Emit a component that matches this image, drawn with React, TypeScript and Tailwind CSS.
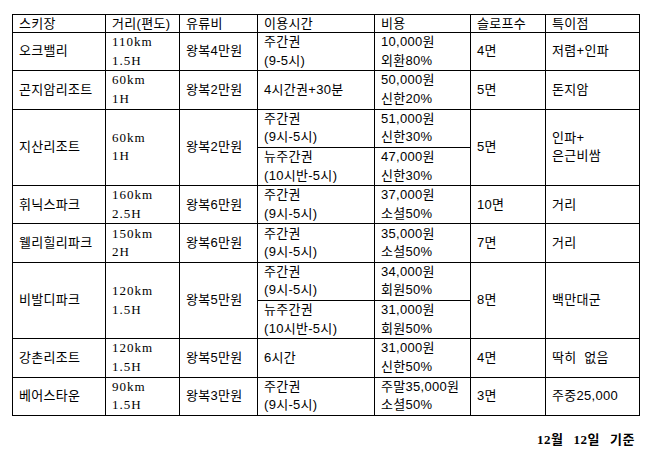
import React from "react";

type Sub = { time: string[]; cost: string[] };
type Row = {
  name: string;
  dist: string[];
  fee: string;
  subs: Sub[];
  slopes: string;
  note: string[];
};

const rows: Row[] = [
  { name: "오크밸리", dist: ["110km", "1.5H"], fee: "왕복4만원", subs: [{ time: ["주간권", "(9-5시)"], cost: ["10,000원", "외환80%"] }], slopes: "4면", note: ["저렴+인파"] },
  { name: "곤지암리조트", dist: ["60km", "1H"], fee: "왕복2만원", subs: [{ time: ["4시간권+30분"], cost: ["50,000원", "신한20%"] }], slopes: "5면", note: ["돈지암"] },
  { name: "지산리조트", dist: ["60km", "1H"], fee: "왕복2만원", subs: [{ time: ["주간권", "(9시-5시)"], cost: ["51,000원", "신한30%"] }, { time: ["뉴주간권", "(10시반-5시)"], cost: ["47,000원", "신한30%"] }], slopes: "5면", note: ["인파+", "은근비쌈"] },
  { name: "휘닉스파크", dist: ["160km", "2.5H"], fee: "왕복6만원", subs: [{ time: ["주간권", "(9시-5시)"], cost: ["37,000원", "소셜50%"] }], slopes: "10면", note: ["거리"] },
  { name: "웰리힐리파크", dist: ["150km", "2H"], fee: "왕복6만원", subs: [{ time: ["주간권", "(9시-5시)"], cost: ["35,000원", "소셜50%"] }], slopes: "7면", note: ["거리"] },
  { name: "비발디파크", dist: ["120km", "1.5H"], fee: "왕복5만원", subs: [{ time: ["주간권", "(9시-5시)"], cost: ["34,000원", "회원50%"] }, { time: ["뉴주간권", "(10시반-5시)"], cost: ["31,000원", "회원50%"] }], slopes: "8면", note: ["백만대군"] },
  { name: "강촌리조트", dist: ["120km", "1.5H"], fee: "왕복5만원", subs: [{ time: ["6시간"], cost: ["31,000원", "신한50%"] }], slopes: "4면", note: ["딱히\u00a0\u00a0없음"] },
  { name: "베어스타운", dist: ["90km", "1.5H"], fee: "왕복3만원", subs: [{ time: ["주간권", "(9시-5시)"], cost: ["주말35,000원", "소셜50%"] }], slopes: "3면", note: ["주중25,000"] },
];

const sans = "font-['Liberation_Sans','Noto_Sans_CJK_KR',sans-serif]";
const serif = "font-['Liberation_Serif','Noto_Sans_CJK_KR',serif] tracking-[1px]";
const td = "border border-black pl-[6px] pr-[2px] py-0 align-middle text-left";

function Lines({ items }: { items: string[] }) {
  return (
    <>
      {items.map((t, i) => (
        <div key={i} className="whitespace-nowrap">
          {t}
        </div>
      ))}
    </>
  );
}

export default function App() {
  return (
    <div className={`w-[655px] h-[458px] bg-white text-black text-[13px] ${sans}`}>
      <div className="pl-[12px] pt-[14px]">
        <table className="table-fixed border-collapse w-[627px] leading-[18.6px] tracking-[0.3px]">
          <colgroup>
            <col className="w-[93px]" />
            <col className="w-[74px]" />
            <col className="w-[78px]" />
            <col className="w-[117px]" />
            <col className="w-[96px]" />
            <col className="w-[75px]" />
            <col className="w-[94px]" />
          </colgroup>
          <thead>
            <tr className="h-[18px] leading-[17px]">
              {["스키장", "거리(편도)", "유류비", "이용시간", "비용", "슬로프수", "특이점"].map((h) => (
                <th key={h} className={`${td} font-normal`}>
                  {h}
                </th>
              ))}
            </tr>
          </thead>
          <tbody>
            {rows.map((r) =>
              r.subs.map((s, si) => (
                <tr key={r.name + si}>
                  {si === 0 && (
                    <>
                      <td rowSpan={r.subs.length} className={td}>
                        {r.name}
                      </td>
                      <td rowSpan={r.subs.length} className={`${td} ${serif}`}>
                        <Lines items={r.dist} />
                      </td>
                      <td rowSpan={r.subs.length} className={td}>
                        {r.fee}
                      </td>
                    </>
                  )}
                  <td className={`${td} h-[38.3px]`}>
                    <Lines items={s.time} />
                  </td>
                  <td className={td}>
                    <Lines items={s.cost} />
                  </td>
                  {si === 0 && (
                    <>
                      <td rowSpan={r.subs.length} className={td}>
                        {r.slopes}
                      </td>
                      <td rowSpan={r.subs.length} className={td}>
                        <Lines items={r.note} />
                      </td>
                    </>
                  )}
                </tr>
              ))
            )}
          </tbody>
        </table>
        <div className="w-[626px] mt-[14px] text-right font-bold leading-[19px] pr-[3px] tracking-[0.5px] [word-spacing:6px]">
          <span className="font-['Liberation_Serif','Noto_Sans_CJK_KR',serif]">12</span>월{" "}
          <span className="font-['Liberation_Serif','Noto_Sans_CJK_KR',serif]">12</span>일 기준
        </div>
      </div>
    </div>
  );
}
